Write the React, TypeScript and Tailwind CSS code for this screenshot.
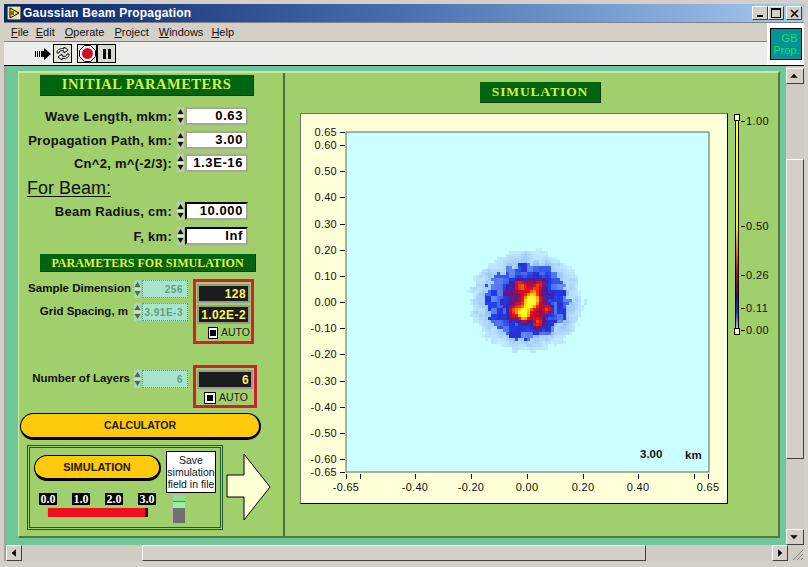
import React from "react";

// intensity of the beam cross-section, sampled on a 3px grid
const blobs = [
  [530, 299, 4.4, 0.8], [522, 312, 3.6, 0.8], [526, 305, 3.4, 0.22], [519, 285, 4, 0.24], [538, 283, 3.6, 0.22],
  [533, 290, 3, 0.22], [545, 308, 3.4, 0.2], [537, 322, 3.8, 0.26], [513, 309, 3.6, 0.22], [527, 301, 13, 0.09],
];

const noise = (i: number, j: number) => {
  const s = Math.sin(i * 12.9898 + j * 78.233) * 43758.5453;
  return s - Math.floor(s);
};

const ramp: [number, number[]][] = [
  [0, [204, 255, 255]], [0.015, [190, 232, 255]], [0.05, [150, 190, 245]], [0.11, [30, 60, 230]],
  [0.17, [60, 30, 170]], [0.26, [190, 10, 50]], [0.34, [240, 20, 20]], [0.5, [255, 150, 0]], [0.68, [255, 245, 20]], [1, [255, 255, 60]],
];

const colorAt = (v: number) => {
  for (let k = 1; k < ramp.length; k++) {
    if (v <= ramp[k][0]) {
      const [a, ca] = ramp[k - 1];
      const [b, cb] = ramp[k];
      const t = (v - a) / (b - a);
      return `rgb(${ca.map((c, n) => Math.round(c + (cb[n] - c) * t)).join(",")})`;
    }
  }
  return "rgb(255,255,60)";
};

const cells: { x: number; y: number; fill: string }[] = [];
for (let j = 0; j < 38; j++) {
  for (let i = 0; i < 42; i++) {
    const x = 464 + i * 3;
    const y = 245 + j * 3;
    const dx = (x + 1.5 - 527) / 57;
    const dy = (y + 1.5 - 301) / 51;
    const r = Math.sqrt(dx * dx + dy * dy) + (noise(Math.floor(i / 2), Math.floor(j / 2)) - 0.5) * 0.12;
    if (r > 1) continue;
    let v = r < 0.45 ? 0.15 : r < 0.72 ? 0.1 : 0.012 + (1 - r) * 0.1;
    v *= 0.7 + noise(Math.floor((j + 1) / 2) + 3, Math.floor((i + 1) / 2) + 7) * 0.6;
    for (const [bx, by, s, a] of blobs) {
      v += a * Math.exp(-((x - bx) ** 2 + (y - by) ** 2) / (2 * s * s));
    }
    cells.push({ x, y, fill: colorAt(v) });
  }
}

const yTicks = [
  ["0.65", 132], ["0.60", 145], ["0.50", 171], ["0.40", 197], ["0.30", 224], ["0.20", 250], ["0.10", 276], ["0.00", 302],
  ["-0.10", 328], ["-0.20", 354], ["-0.30", 381], ["-0.40", 407], ["-0.50", 433], ["-0.60", 459], ["-0.65", 472],
] as const;
const xTicks = [
  ["-0.65", 346], ["-0.40", 415], ["-0.20", 471], ["0.00", 527], ["0.20", 583], ["0.40", 638], ["0.65", 708],
] as const;
const xMinor = [360, 694];

const Spinner = ({ muted = false }: { muted?: boolean }) => (
  <svg width="7" height="18" viewBox="0 0 7 18" className="shrink-0">
    <rect width="7" height="18" fill={muted ? "#a4d8b0" : "#c4c4ba"} />
    <path d="M3.5 2 L6.5 7 L0.5 7Z" fill={muted ? "#506850" : "#111"} />
    <path d="M3.5 16 L6.5 11 L0.5 11Z" fill={muted ? "#506850" : "#111"} />
    <path d="M0 9 H7" stroke={muted ? "#e0f0e0" : "#fff"} />
  </svg>
);

const Row = ({ label, value, className, heavy = false }: { label: string; value: string; className: string; heavy?: boolean }) => (
  <div className={`flex h-[18px] items-center ${className}`}>
    <span className="w-[153px] text-right text-[13px] leading-none font-bold tracking-[0.28px] whitespace-nowrap text-[#101010]">{label}</span>
    <div className="ml-[5px] flex"><Spinner /></div>
    <div
      className={`ml-px flex h-[18px] w-[63px] items-center justify-end bg-white pr-[3px] text-[13px] font-bold tracking-[0.6px] border-[#a8a898] ${
        heavy ? "border-t-2 border-r-2 border-b-2 border-l-2 border-t-black border-l-black" : "border-2"
      }`}
    >
      {value}
    </div>
  </div>
);

const MutedRow = ({ label, value, className, labelWidth }: { label: string; value: string; className: string; labelWidth: string }) => (
  <div className={`flex h-[18px] items-center ${className}`}>
    <span className={`${labelWidth} text-right text-[11.5px] font-bold whitespace-nowrap text-[#101010]`}>{label}</span>
    <div className="ml-[3px] flex"><Spinner muted /></div>
    <div className="ml-px flex h-[18px] w-[46px] items-center justify-end border border-dotted border-[#5f9f80] bg-[#a8e4cc] bg-[radial-gradient(#7cc0a4_0.6px,transparent_0.7px)] bg-[length:2px_2px] pr-[4px] text-[10px] font-bold tracking-[0.5px] text-[#5f9f85]">
      {value}
    </div>
  </div>
);

const DarkField = ({ value, className }: { value: string; className: string }) => (
  <div className={`flex h-[19px] items-center justify-end border-2 border-[#9a9a8e] bg-[#1c1c1c] pr-[2px] text-[12px] font-bold tracking-[0.4px] text-[#fff65a] ${className}`}>
    {value}
  </div>
);

const Auto = ({ className }: { className: string }) => (
  <div className={`flex h-[13px] items-center gap-[3px] text-[10.5px] text-[#202020] ${className}`}>
    <span className="flex h-[12px] w-[12px] items-center justify-center border border-black bg-white">
      <span className="h-[6px] w-[6px] bg-black" />
    </span>
    AUTO
  </div>
);

const Pill = ({ label, className }: { label: string; className: string }) => (
  <div className={`flex items-center justify-center rounded-full border border-r-2 border-b-[3px] border-black bg-[#ffc90c] font-bold text-[#201a00] ${className}`}>
    {label}
  </div>
);

const ScaleLabel = ({ text }: { text: string }) => (
  <span className="flex h-[12px] w-[18px] items-center justify-center bg-black font-['Liberation_Serif',serif] text-[12px] font-bold text-white">{text}</span>
);

const ArrowButton = ({ dir, className }: { dir: "up" | "down" | "left" | "right"; className: string }) => {
  const path = { up: "M7.5 5 L11.5 9.5 H3.5Z", down: "M7.5 10 L3.5 5.5 H11.5Z", left: "M5 7.5 L9.5 3.5 V11.5Z", right: "M10 7.5 L5.5 3.5 V11.5Z" }[dir];
  return (
    <div className={`shrink-0 border border-t-white border-r-[#404040] border-b-[#404040] border-l-white bg-[#d4d0c8] ${className}`}>
      <svg width="14" height="14" viewBox="0 0 15 15"><path d={path} fill="#000" /></svg>
    </div>
  );
};

const App = () => (
  <div className="flex h-[567px] w-[808px] flex-col overflow-hidden bg-[#d4d0c8] px-[4px] pt-[4px] pb-[5px] font-['Liberation_Sans',sans-serif] text-black">
    {/* title bar */}
    <div className="flex h-[18px] shrink-0 items-center bg-gradient-to-r from-[#0a246a] via-[#4a6fb0] to-[#a6caf0] pr-[2px] pl-[3px]">
      <svg width="14" height="14" viewBox="0 0 14 14" className="shrink-0">
        <rect width="14" height="14" fill="#e8e4b0" stroke="#000" />
        <path d="M3 2 L12 7 L3 12Z" fill="#f4e04a" stroke="#000" />
        <path d="M4 6 H7 M4 8 H7" stroke="#000" />
      </svg>
      <span className="ml-[2px] text-[12px] font-bold tracking-[0.2px] text-white">Gaussian Beam Propagation</span>
      <div className="ml-auto flex">
        <div className="flex h-[14px] w-[16px] items-end justify-center border border-t-white border-r-[#404040] border-b-[#404040] border-l-white bg-[#d4d0c8] pb-[2px]"><span className="h-[2px] w-[6px] bg-black" /></div>
        <div className="flex h-[14px] w-[16px] items-center justify-center border border-t-white border-r-[#404040] border-b-[#404040] border-l-white bg-[#d4d0c8]"><span className="h-[10px] w-[10px] border border-t-2 border-black" /></div>
        <div className="ml-[2px] flex h-[14px] w-[16px] items-center justify-center border border-t-white border-r-[#404040] border-b-[#404040] border-l-white bg-[#d4d0c8]">
          <svg width="9" height="9" viewBox="0 0 9 9"><path d="M1 1 L8 8 M8 1 L1 8" stroke="#000" strokeWidth="1.6" /></svg>
        </div>
      </div>
    </div>

    {/* menu and toolbar */}
    <div className="flex h-[44px] shrink-0 border-t border-b border-t-[#808080] border-b-black">
      <div className="flex flex-1 flex-col">
        <div className="flex h-[19px] items-center gap-[10px] border-b border-[#808080] pl-[7px] text-[11px] text-[#111]">
          <span className="mr-[-3px]"><u>F</u>ile</span>
          <span><u>E</u>dit</span>
          <span><u>O</u>perate</span>
          <span><u>P</u>roject</span>
          <span className="mr-[-2px]"><u>W</u>indows</span>
          <span><u>H</u>elp</span>
        </div>
        <div className="flex flex-1 items-center bg-[#ecedeb] pl-[31px]">
          <svg width="18" height="14" viewBox="0 0 18 14">
            <path d="M0 4 H1 V10 H0Z M2 4 H3 V10 H2Z M4 4 H5 V10 H4Z M6 4 H9 V1 L16 7 L9 13 V10 H6Z" fill="#000" />
          </svg>
          <div className="flex h-[19px] w-[19px] items-center justify-center border border-black bg-[#e4e6d8]">
            <svg width="16" height="15" viewBox="0 0 16 15" fill="none" stroke="#000"><path d="M2 7 C2 3 6 2 9 3 L9 1 L13 4 L9 7 L9 5 C6 4 4 5 4 7 Z" fill="#fff" /><path d="M14 8 C14 12 10 13 7 12 L7 14 L3 11 L7 8 L7 10 C10 11 12 10 12 8 Z" fill="#fff" /></svg>
          </div>
          <div className="ml-[5px] flex h-[19px] w-[20px] items-center justify-center border border-black bg-[#e4e6d8]">
            <svg width="17" height="17" viewBox="0 0 17 17">
              <path d="M5.5 0.5 H11.5 L16.5 5.5 V11.5 L11.5 16.5 H5.5 L0.5 11.5 V5.5Z" fill="#fff" stroke="#000" />
              <circle cx="8.5" cy="8.5" r="5.5" fill="#d01020" />
            </svg>
          </div>
          <div className="flex h-[19px] w-[19px] items-center justify-center gap-[2px] border border-black bg-[#d8dcc8]">
            <span className="h-[10px] w-[3px] bg-black" />
            <span className="h-[10px] w-[3px] bg-black" />
          </div>
        </div>
      </div>
      <div className="flex w-[37px] items-center justify-center bg-white">
        <div className="flex h-[32px] w-[32px] flex-col items-end justify-center border border-black bg-[#009494] text-[11px] leading-[12px] text-[#22dd66]">
          <span className="pr-[3px]">GB</span>
          <span className="pr-[1px]">Prop.</span>
        </div>
      </div>
    </div>

    {/* panel and vertical scrollbar */}
    <div className="flex h-[479px] shrink-0 border-l-2 border-[#a0a098]">
      <div className="flex w-[780px] flex-col bg-[#6fc79a] pt-[5px] pr-[6px] pb-[7px] pl-[12px]">
        <div className="flex flex-1 border-t-2 border-r-2 border-b-2 border-l border-t-[#c6e8a0] border-r-[#4f7a3c] border-b-[#4f7a3c] border-l-[#c6e8a0] bg-[#a0cf6b]">
          {/* left column */}
          <div className="flex w-[266px] shrink-0 flex-col border-r-2 border-[#4f7038]">
            <div className="mt-[2px] ml-[21px] flex h-[21px] w-[214px] items-center justify-center border-r border-b border-[#0d3a0d] bg-[#006410] font-['Liberation_Serif',serif] text-[14.5px] font-bold tracking-[0.5px] text-[#d8f048]">
              INITIAL PARAMETERS
            </div>
            <Row className="mt-[11px]" label="Wave Length, mkm:" value="0.63" />
            <Row className="mt-[6px]" label="Propagation Path, km:" value="3.00" />
            <Row className="mt-[5px]" label="Cn^2, m^(-2/3):" value="1.3E-16" />
            <div className="mt-[5px] ml-[8px] h-[22px] text-[18px] leading-[22px] text-[#101010] underline underline-offset-2">For Beam:</div>
            <Row className="mt-[3px]" label="Beam Radius, cm:" value="10.000" heavy />
            <Row className="mt-[7px]" label="F, km:" value="Inf" heavy />
            <div className="mt-[9px] ml-[21px] flex h-[18px] w-[216px] items-center justify-center border-r border-b border-[#0d3a0d] bg-[#006410] font-['Liberation_Serif',serif] text-[12px] font-bold text-[#e8f048]">
              PARAMETERS FOR SIMULATION
            </div>

            <div className="mt-[7px] flex">
              <div className="flex w-[174px] flex-col">
                <MutedRow className="mt-[1px]" labelWidth="w-[112px]" label="Sample Dimension" value="256" />
                <MutedRow className="mt-[5px]" labelWidth="w-[112px] pr-[3px]" label="Grid Spacing, m" value="3.91E-3" />
              </div>
              <div className="h-[65px] w-[61px] border-[3px] border-[#d3202e] px-[1px] pt-[2px]">
                <DarkField className="w-[53px]" value="128" />
                <DarkField className="mt-[2px] w-[53px]" value="1.02E-2" />
                <Auto className="mt-[2px] ml-[11px]" />
              </div>
            </div>

            <div className="mt-[21px] flex">
              <div className="flex w-[174px] flex-col pt-[5px]">
                <MutedRow className="" labelWidth="w-[112px] pr-[1px]" label="Number of Layers" value="6" />
              </div>
              <div className="h-[43px] w-[64px] border-[3px] border-[#d3202e] px-[1px] pt-[2px]">
                <DarkField className="w-[56px]" value="6" />
                <Auto className="mt-[2px] ml-[7px]" />
              </div>
            </div>

            <Pill className="mt-[5px] ml-[1px] h-[27px] w-[241px] text-[10.5px]" label="CALCULATOR" />

            <div className="mt-[5px] ml-[8px] flex items-center">
              <div className="flex h-[85px] w-[196px] border-[3px] border-double border-[#1d5a2c]">
                <div className="flex w-[136px] flex-col pt-[7px] pl-[4px]">
                  <Pill className="h-[26px] w-[127px] text-[11px]" label="SIMULATION" />
                  <div className="mt-[12px] flex gap-[15px] pl-[5px]">
                    {["0.0", "1.0", "2.0", "3.0"].map((t) => <ScaleLabel key={t} text={t} />)}
                  </div>
                  <div className="mt-[3px] ml-[13px] flex h-[9px] w-[101px] border-l border-[#b0b0a0] bg-[#f0101c]">
                    <span className="ml-auto h-full w-[3px] bg-[#300]" />
                  </div>
                </div>
                <div className="flex flex-col pt-[3px]">
                  <div className="flex h-[42px] w-[50px] flex-col items-center justify-center border border-black bg-white text-[10.5px] leading-[12px] text-[#111]">
                    <span>Save</span>
                    <span>simulation</span>
                    <span>field in file</span>
                  </div>
                  <div className="mt-[1px] ml-[6px] flex h-[30px] w-[14px] flex-col border border-[#b0b8a8] bg-[#707070]">
                    <span className="h-[6px] bg-[#8fe088]" />
                    <span className="mt-px h-[6px] bg-[#9cf09a]" />
                  </div>
                </div>
              </div>
              <svg width="46" height="70" viewBox="0 0 46 70" className="ml-[3px] shrink-0">
                <path d="M1 22 H18 V1 L44 34 L18 67 V44 H1Z" fill="#ffffd6" stroke="#000" />
              </svg>
            </div>
          </div>

          {/* right column */}
          <div className="flex flex-1 flex-col pl-[15px]">
            <div className="mt-[9px] ml-[180px] flex h-[21px] w-[121px] items-center justify-center border-r border-b border-[#0d3a0d] bg-[#006410] font-['Liberation_Serif',serif] text-[13.5px] font-bold tracking-[0.9px] text-[#d8f048]">
              SIMULATION
            </div>
            <div className="mt-[10px] flex items-start">
              <div className="h-[391px] w-[428px] border border-t-[#707860] border-r-black border-b-black border-l-[#707860] bg-[#ffffd8]">
                <svg width="426" height="389" viewBox="301 114 426 389" className="block font-['Liberation_Sans',sans-serif]">
                  <rect x="346" y="132" width="363" height="340" fill="#ccffff" stroke="#5a6a50" />
                  {cells.map((c, n) => <rect key={n} x={c.x} y={c.y} width="3" height="3" fill={c.fill} />)}
                  {yTicks.map(([t, y]) => (
                    <g key={t}>
                      <path d={`M340 ${y}.5 H345`} stroke="#111" />
                      <text x="337" y={y + 4} textAnchor="end" fontSize="11" letterSpacing="0.3" fill="#111">{t}</text>
                    </g>
                  ))}
                  {xTicks.map(([t, x]) => (
                    <g key={t}>
                      <path d={`M${x}.5 474 V479`} stroke="#111" />
                      <text x={x} y="491" textAnchor="middle" fontSize="11" letterSpacing="0.3" fill="#111">{t}</text>
                    </g>
                  ))}
                  {xMinor.map((x) => <path key={x} d={`M${x}.5 474 V479`} stroke="#111" />)}
                  <text x="640" y="458" fontSize="11.5" fontWeight="700" fill="#111">3.00</text>
                  <text x="685" y="459" fontSize="11.5" fontWeight="700" fill="#111">km</text>
                </svg>
              </div>
              <svg width="48" height="230" viewBox="0 0 48 230" className="mt-[1px] ml-[6px] font-['Liberation_Sans',sans-serif]">
                <defs>
                  <linearGradient id="bar" x1="0" y1="0" x2="0" y2="1">
                    <stop offset="0" stopColor="#ffff40" />
                    <stop offset="0.5" stopColor="#ffee30" />
                    <stop offset="0.6" stopColor="#f08a10" />
                    <stop offset="0.72" stopColor="#b01020" />
                    <stop offset="0.83" stopColor="#401070" />
                    <stop offset="0.9" stopColor="#1038d0" />
                    <stop offset="1" stopColor="#e0f4ff" />
                  </linearGradient>
                </defs>
                <rect x="1.5" y="1.5" width="3" height="218" fill="url(#bar)" stroke="#000" />
                <rect x="0.5" y="0.5" width="5" height="6" fill="#ffffd8" stroke="#000" />
                <rect x="0.5" y="214.5" width="5" height="6" fill="#ffffd8" stroke="#000" />
                {[["1.00", 7], ["0.50", 112], ["0.26", 161], ["0.11", 194], ["0.00", 216]].map(([t, y]) => (
                  <g key={t}>
                    <path d={`M7 ${y}.5 H11`} stroke="#111" />
                    <text x="12" y={Number(y) + 4} fontSize="11" letterSpacing="0.4" fill="#111">{t}</text>
                  </g>
                ))}
              </svg>
            </div>
          </div>
        </div>
      </div>

      {/* vertical scrollbar */}
      <div className="flex flex-1 flex-col bg-[#cfccc4] pt-px">
        <ArrowButton dir="up" className="mt-[1px]" />
        <div className="mt-[75px] h-[300px] border border-t-white border-r-[#404040] border-b-[#404040] border-l-white bg-[#d4d0c8]" />
        <ArrowButton dir="down" className="mt-auto" />
      </div>
    </div>

    {/* horizontal scrollbar */}
    <div className="flex h-[16px] shrink-0 border-l-2 border-[#a0a098] bg-[#cfccc4]">
      <ArrowButton dir="left" className="" />
      <div className="ml-[120px] h-full w-[504px] border border-t-white border-r-[#404040] border-b-[#404040] border-l-white bg-[#d4d0c8]" />
      <ArrowButton dir="right" className="ml-[126px]" />
      <svg width="16" height="16" viewBox="0 0 16 16" className="ml-auto">
        <path d="M15 5 L5 15 M15 9 L9 15 M15 13 L13 15" stroke="#808080" />
      </svg>
    </div>
  </div>
);

export default App;
